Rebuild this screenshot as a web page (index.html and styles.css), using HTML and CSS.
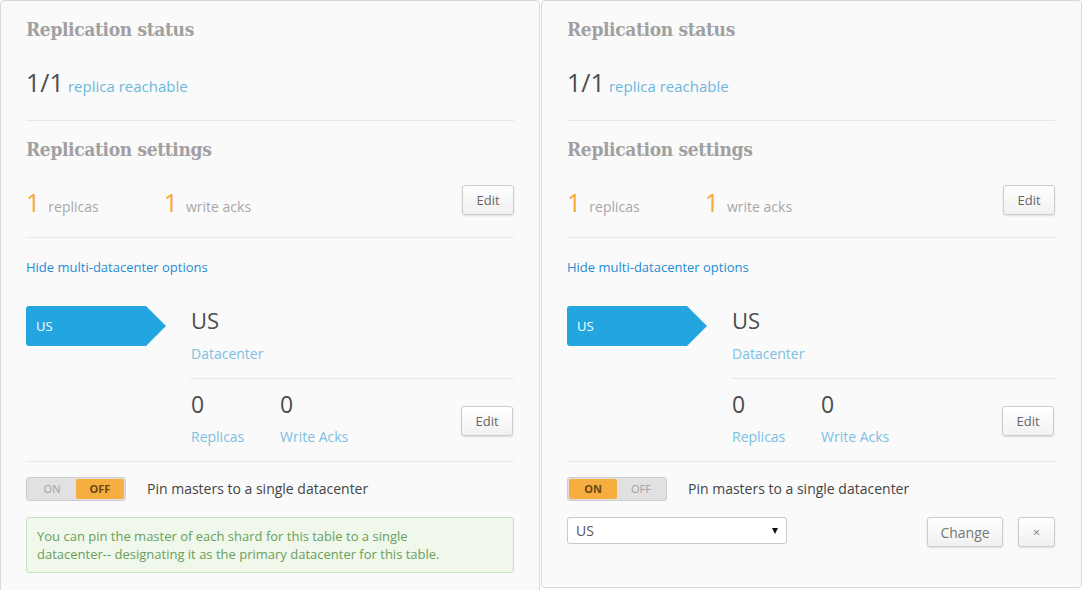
FILE: index.html
```html
<!DOCTYPE html>
<html>
<head>
<meta charset="utf-8">
<link rel="stylesheet" href="styles.css">
</head>
<body>
<div class="page">
  <section class="panel panel-left">
    <h2 class="heading">Replication status</h2>
    <div class="status-row"><span class="big">1/1</span> <span class="status-label">replica reachable</span></div>
    <hr class="sep">
    <h2 class="heading heading-2">Replication settings</h2>
    <div class="settings-row">
      <div class="stats">
        <span class="num">1</span><span class="stat-label">replicas</span>
        <span class="num num-2">1</span><span class="stat-label">write acks</span>
      </div>
      <button class="btn btn-edit">Edit</button>
    </div>
    <hr class="sep sep-2">
    <a class="link">Hide multi-datacenter options</a>
    <div class="dc">
      <div class="dc-tag">US</div>
      <div class="dc-info">
        <div class="dc-name">US</div>
        <div class="dc-label">Datacenter</div>
        <hr class="sep sep-dc">
        <div class="dc-stats">
          <div class="dc-stat"><div class="dc-num">0</div><div class="dc-label">Replicas</div></div>
          <div class="dc-stat"><div class="dc-num">0</div><div class="dc-label">Write Acks</div></div>
          <button class="btn btn-edit btn-dc">Edit</button>
        </div>
      </div>
    </div>
    <hr class="sep sep-3">
    <div class="pin-row">
      <div class="toggle"><span class="tg">ON</span><span class="tg tg-on">OFF</span></div>
      <span class="pin-label">Pin masters to a single datacenter</span>
    </div>
    <div class="alert">You can pin the master of each shard for this table to a single datacenter-- designating it as the primary datacenter for this table.</div>
  </section>
  <section class="panel panel-right">
    <h2 class="heading">Replication status</h2>
    <div class="status-row"><span class="big">1/1</span> <span class="status-label">replica reachable</span></div>
    <hr class="sep">
    <h2 class="heading heading-2">Replication settings</h2>
    <div class="settings-row">
      <div class="stats">
        <span class="num">1</span><span class="stat-label">replicas</span>
        <span class="num num-2">1</span><span class="stat-label">write acks</span>
      </div>
      <button class="btn btn-edit">Edit</button>
    </div>
    <hr class="sep sep-2">
    <a class="link">Hide multi-datacenter options</a>
    <div class="dc">
      <div class="dc-tag">US</div>
      <div class="dc-info">
        <div class="dc-name">US</div>
        <div class="dc-label">Datacenter</div>
        <hr class="sep sep-dc">
        <div class="dc-stats">
          <div class="dc-stat"><div class="dc-num">0</div><div class="dc-label">Replicas</div></div>
          <div class="dc-stat"><div class="dc-num">0</div><div class="dc-label">Write Acks</div></div>
          <button class="btn btn-edit btn-dc">Edit</button>
        </div>
      </div>
    </div>
    <hr class="sep sep-3">
    <div class="pin-row">
      <div class="toggle"><span class="tg tg-on">ON</span><span class="tg">OFF</span></div>
      <span class="pin-label">Pin masters to a single datacenter</span>
    </div>
    <div class="choose-row">
      <div class="select"><span>US</span><span class="caret"></span></div>
      <button class="btn btn-change">Change</button>
      <button class="btn btn-x">×</button>
    </div>
  </section>
</div>
</body>
</html>
```

FILE: styles.css
```css
html, body {
  margin: 0;
  padding: 0;
  overflow: hidden;
  background: #ffffff;
}
body {
  font-family: "Open Sans", "DejaVu Sans", sans-serif;
  color: #555;
}
.page {
  display: flex;
  gap: 1px;
  align-items: flex-start;
}
.panel {
  box-sizing: border-box;
  width: 540px;
  background: #fafafa;
  border: 1px solid #d9d9d9;
  border-radius: 4px;
  padding: 16px 25px 40px 25px;
}
.panel-right {
  width: 541px;
  padding-right: 26px;
}
.heading {
  margin: 0;
  font-family: "DejaVu Serif Condensed", "DejaVu Serif", serif;
  font-weight: bold;
  font-size: 19px;
  letter-spacing: -0.35px;
  line-height: 24px;
  color: #a0a0a0;
}
.heading-2 {
  margin-top: 16px;
}
.status-row {
  margin-top: 26px;
  line-height: 30px;
  height: 30px;
}
.big {
  font-size: 25px;
  color: #4d4d4d;
}
.status-label {
  font-size: 15px;
  color: #6cb7dd;
}
.sep {
  border: 0;
  border-top: 1px solid #e7e7e7;
  margin: 23px 0 0 0;
  height: 0;
}
.settings-row {
  margin-top: 24px;
  height: 30px;
  display: flex;
  justify-content: space-between;
  align-items: flex-start;
}
.stats {
  margin-top: 2px;
  height: 30px;
  line-height: 30px;
  display: flex;
  align-items: baseline;
}
.num {
  font-size: 25px;
  line-height: 30px;
  color: #f6a935;
  margin-right: 8px;
}
.num-2 {
  margin-left: 65px;
}
.stat-label {
  font-size: 14px;
  line-height: 20px;
  color: #a8a8a8;
}
.btn {
  font-family: "Open Sans", "DejaVu Sans", sans-serif;
  font-size: 13px;
  color: #666;
  background: linear-gradient(#ffffff, #f1f1f1);
  border: 1px solid #cccccc;
  border-radius: 3px;
  box-shadow: 0 1px 2px rgba(0,0,0,0.12);
  height: 30px;
  padding: 0;
  box-sizing: border-box;
}
.btn-edit {
  width: 52px;
}
.sep-2 {
  margin-top: 22px;
}
.link {
  display: block;
  margin-top: 20px;
  font-size: 13px;
  line-height: 18px;
  color: #1e8bd3;
}
.dc {
  margin-top: 30px;
  display: flex;
  align-items: flex-start;
}
.dc-tag {
  width: 140px;
  height: 40px;
  flex: none;
  box-sizing: border-box;
  background: #23a6e0;
  border-radius: 3px;
  clip-path: polygon(0 0, 120px 0, 140px 50%, 120px 100%, 0 100%);
  color: #fff;
  font-size: 13px;
  line-height: 40px;
  padding-left: 10px;
}
.dc-info {
  margin-left: 24px;
  flex: 1;
}
.dc-name {
  font-size: 22px;
  line-height: 28px;
  color: #4d4d4d;
  padding-left: 1px;
}
.dc-label {
  font-size: 14px;
  line-height: 20px;
  color: #7cc0e3;
  padding-left: 1px;
}
.dc-name + .dc-label {
  margin-top: 10px;
}
.sep-dc {
  margin-top: 14px;
}
.dc-stats {
  margin-top: 11px;
  display: flex;
  align-items: flex-start;
}
.dc-stat {
  width: 89px;
}
.dc-num {
  font-size: 23px;
  line-height: 28px;
  color: #4d4d4d;
  padding-left: 1px;
  margin-bottom: 9px;
}
.btn-dc {
  margin-left: auto;
  margin-top: 16px;
  margin-right: 1px;
}
.sep-3 {
  margin-top: 14px;
}
.pin-row {
  margin-top: 15px;
  display: flex;
  align-items: center;
}
.toggle {
  box-sizing: border-box;
  width: 100px;
  height: 24px;
  background: #e1e1e1;
  border: 1px solid #cdcdcd;
  border-radius: 3px;
  display: flex;
  padding: 1px;
}
.tg {
  flex: 1;
  text-align: center;
  font-size: 11px;
  line-height: 20px;
  color: #a0a0a0;
  border-radius: 2px;
}
.tg-on {
  background: #f6ae40;
  color: #6a4613;
  font-weight: bold;
}
.pin-label {
  margin-left: 21px;
  font-size: 14px;
  line-height: 20px;
  color: #444;
}
.alert {
  margin-top: 16px;
  background: #eff8ea;
  border: 1px solid #c8e2bb;
  border-radius: 3px;
  padding: 9px 40px 9px 10px;
  font-size: 13px;
  line-height: 18px;
  color: #6b9d5f;
}
.choose-row {
  margin-top: 16px;
  display: flex;
  align-items: flex-start;
}
.select {
  box-sizing: border-box;
  width: 220px;
  height: 27px;
  background: #fff;
  border: 1px solid #c9c9c9;
  border-radius: 3px;
  display: flex;
  align-items: center;
  justify-content: space-between;
  padding: 0 8px 0 8px;
  font-size: 14px;
  color: #555;
}
.caret {
  width: 0;
  height: 0;
  border-left: 3.5px solid transparent;
  border-right: 3.5px solid transparent;
  border-top: 6px solid #111;
}
.btn-change {
  margin-left: auto;
  width: 76px;
  font-size: 14px;
  color: #777;
}
.btn-x {
  margin-left: 15px;
  width: 37px;
  font-size: 13px;
  color: #888;
}
```
